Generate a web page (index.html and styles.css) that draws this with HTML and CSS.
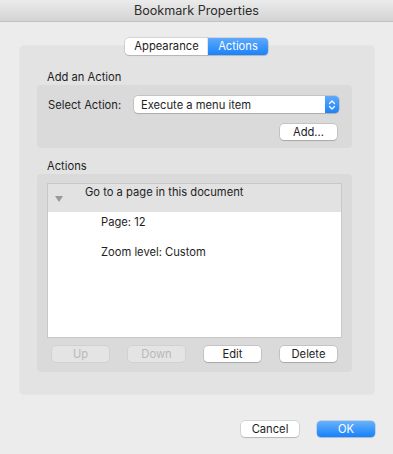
FILE: index.html
```html
<html lang="en">
<head>
    <meta charset="UTF-8">
    <meta name="viewport" content="width=device-width, initial-scale=1.0">
    <title>Bookmark Properties</title>
    <link rel="stylesheet" href="styles.css">
</head>
<body>

<div class="window">
    <div class="titlebar">Bookmark Properties</div>

    <div class="tabs">
        <div class="segment">Appearance</div>
        <div class="segment selected">Actions</div>
    </div>

    <div class="tab-box">
        <div class="group-label">Add an Action</div>
        <div class="group add-group">
            <div class="select-row">
                <span class="select-label">Select Action:</span>
                <div class="popup">
                    <span class="popup-text">Execute a menu item</span>
                    <span class="stepper">
                        <svg width="8" height="12" viewBox="0 0 8 12">
                            <path d="M1.5 4.5 L4 2 L6.5 4.5 M1.5 7.5 L4 10 L6.5 7.5" fill="none" stroke="#fff" stroke-width="1.3" stroke-linecap="round" stroke-linejoin="round"/>
                        </svg>
                    </span>
                </div>
            </div>
            <div class="add-row">
                <button class="btn">Add...</button>
            </div>
        </div>

        <div class="group-label second">Actions</div>
        <div class="group actions-group">
            <div class="list">
                <div class="list-header">
                    <span class="triangle"></span>
                    <span class="header-text">Go to a page in this document</span>
                </div>
                <div class="list-item">Page: 12</div>
                <div class="list-item">Zoom level: Custom</div>
            </div>
            <div class="list-buttons">
                <button class="btn" disabled>Up</button>
                <button class="btn" disabled>Down</button>
                <button class="btn">Edit</button>
                <button class="btn">Delete</button>
            </div>
        </div>
    </div>

    <div class="dialog-buttons">
        <button class="btn">Cancel</button>
        <button class="btn primary">OK</button>
    </div>
</div>

</body>
</html>
```

FILE: styles.css
```css
body {
    margin: 0;
    padding: 0;
    background: #ececec;
    font-family: Inter, "Liberation Sans", Arial, sans-serif;
    font-size: 11.2px;
    color: #1e1e1e;
}
.window {
    width: 393px;
    height: 454px;
    background: #ececec;
    border-radius: 5px 5px 0 0;
    overflow: hidden;
}
.titlebar {
    height: 21px;
    line-height: 22px;
    font-size: 12.6px;
    text-align: center;
    color: #2c2c2c;
    background: linear-gradient(#ebebeb, #d4d4d4);
    border-bottom: 1px solid #c2c2c2;
}
.tabs {
    display: flex;
    justify-content: center;
    margin-top: 16px;
    position: relative;
    z-index: 1;
}
.segment {
    width: 83px;
    height: 17px;
    line-height: 17px;
    text-align: center;
    background: #fff;
    box-shadow: 0 0 0 0.5px rgba(0, 0, 0, 0.2), 0 1px 1px rgba(0, 0, 0, 0.12);
    border-radius: 4px 0 0 4px;
}
.segment.selected {
    width: 60px;
    color: #fff;
    background: linear-gradient(#5ea9fb, #1a83fb);
    border-radius: 0 4px 4px 0;
}
.tab-box {
    margin: -9px 19px 0 20px;
    padding: 23px 22px 22px 17px;
    background: #e3e3e3;
    border-radius: 4px;
    box-shadow: 0 0 0 0.5px rgba(0, 0, 0, 0.06);
}
.group-label {
    height: 16px;
    line-height: 16px;
    padding-left: 10px;
}
.group-label.second {
    margin-top: 10px;
}
.group {
    background: #dadada;
    border-radius: 4px;
}
.add-group {
    height: 52px;
    padding: 11px 15px 0 11px;
}
.select-row {
    display: flex;
    align-items: center;
    height: 17px;
}
.select-label {
    width: 86px;
}
.popup {
    display: flex;
    align-items: center;
    justify-content: space-between;
    width: 205px;
    height: 17px;
    margin-right: -2px;
    background: #fff;
    border-radius: 4px;
    box-shadow: 0 0 0 0.5px rgba(0, 0, 0, 0.2), 0 1px 1px rgba(0, 0, 0, 0.12);
}
.popup-text {
    padding-left: 7px;
}
.stepper {
    display: flex;
    align-items: center;
    justify-content: center;
    width: 14px;
    height: 17px;
    background: linear-gradient(#5ea9fb, #1a83fb);
    border-radius: 0 4px 4px 0;
}
.add-row {
    display: flex;
    justify-content: flex-end;
    margin-top: 11px;
}
.btn {
    width: 57px;
    height: 16px;
    padding: 0;
    font-family: inherit;
    font-size: 11.2px;
    line-height: 16px;
    color: #1e1e1e;
    background: #fff;
    border: none;
    border-radius: 4px;
    box-shadow: 0 0 0 0.5px rgba(0, 0, 0, 0.2), 0 1px 1px rgba(0, 0, 0, 0.14);
}
.btn:disabled {
    color: #b8b8b8;
    background: #e4e4e4;
    box-shadow: 0 0 0 0.5px rgba(0, 0, 0, 0.08);
}
.actions-group {
    height: 189px;
    padding: 9px 10px 0 10px;
}
.list {
    width: 293px;
    height: 153px;
    background: #fff;
    border: 1px solid #c8c8c8;
}
.list-header {
    display: flex;
    height: 28px;
    background: #e2e2e2;
}
.triangle {
    width: 0;
    height: 0;
    margin: 12px 0 0 7px;
    border-left: 4px solid transparent;
    border-right: 4px solid transparent;
    border-top: 6px solid #999;
}
.header-text {
    margin-left: 22px;
    line-height: 16px;
}
.list-item {
    height: 30px;
    line-height: 16px;
    padding: 0 0 0 53px;
}
.list-header + .list-item {
    padding-top: 2px;
}
.list-buttons {
    display: flex;
    gap: 19px;
    margin-top: 8px;
    padding-left: 5px;
}
.dialog-buttons {
    display: flex;
    justify-content: flex-end;
    gap: 18px;
    margin: 27px 18px 0 0;
}
.dialog-buttons .btn {
    width: 58px;
}
.btn.primary {
    color: #fff;
    background: linear-gradient(#69b1fb, #1582fb);
    box-shadow: 0 0 0 0.5px rgba(0, 60, 160, 0.3), 0 1px 1px rgba(0, 0, 0, 0.12);
}
```
